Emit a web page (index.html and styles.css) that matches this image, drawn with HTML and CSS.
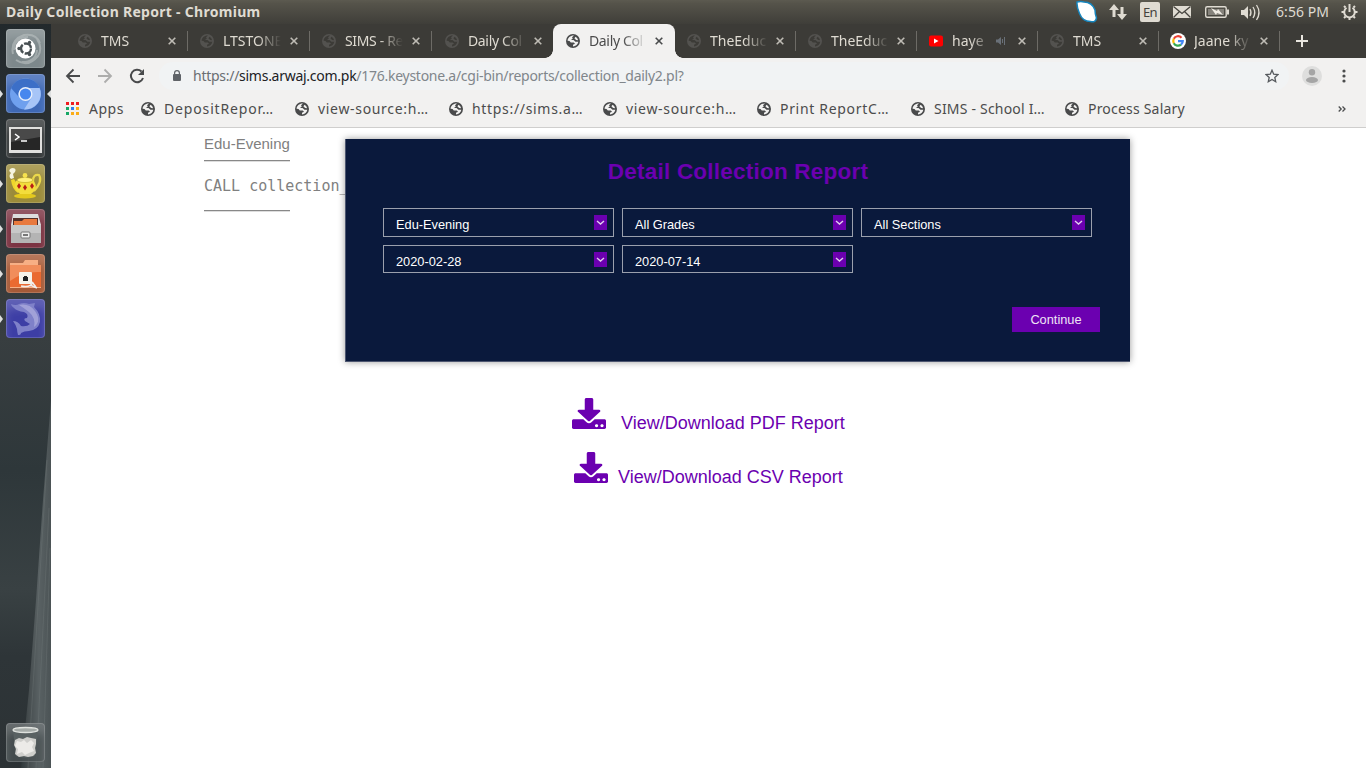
FILE: index.html
```
<!DOCTYPE html>
<html lang="en">
<head>
<meta charset="utf-8">
<title>Daily Collection Report</title>
<link rel="stylesheet" href="styles.css">
</head>
<body>
<svg class="defs" aria-hidden="true">
  <symbol id="globe" viewBox="0 0 14 14"><path fill="currentColor" fill-rule="evenodd" d="M7 0a7 7 0 1 0 0 14A7 7 0 0 0 7 0ZM8 1.5 6 3.2 6.8 4.5 5 6H7.5L9.5 7.8H12.3C12 10.5 9.8 12.3 7 12.4V10.8L9 9.7 7.8 8.4 4.8 8.4 3.5 7 1.6 6.8C1.7 3.9 4.3 1.3 8 1.5ZM9.6 2.8 8.4 4.2 10.1 5.9 12 6.2C11.8 4.7 10.9 3.6 9.6 2.8Z"/></symbol>
  <symbol id="close" viewBox="0 0 8 8"><path d="m.7.7 6.6 6.6m0-6.6L.7 7.3" stroke="currentColor" stroke-width="1.6"/></symbol>
  <symbol id="download" viewBox="0 0 512 512" preserveAspectRatio="none"><path fill="currentColor" d="M216 0h80c13.300 0 24 10.700 24 24v168h87.700c17.800 0 26.700 21.500 14.100 34.100L269.700 378.300c-7.500 7.500-19.800 7.500-27.300 0L90.100 226.100c-12.600-12.600-3.700-34.100 14.100-34.100H192V24c0-13.300 10.700-24 24-24zm296 376v112c0 13.300-10.700 24-24 24H24c-13.300 0-24-10.700-24-24V376c0-13.300 10.700-24 24-24h146.700l49 49c20.100 20.100 52.500 20.100 72.600 0l49-49H488c13.300 0 24 10.700 24 24zm-118 82c0-15-9-24-24-24s-24 9-24 24 9 24 24 24 24-9 24-24zm82 0c0-15-9-24-24-24s-24 9-24 24 9 24 24 24 24-9 24-24z"/></symbol>
</svg>

<header class="menubar">
  <span class="window-title">Daily Collection Report - Chromium</span>
  <svg class="tray" width="290" height="24" viewBox="1076 0 290 24">
    <path d="M1077 2q4-1 7 0 8 0 11 8 0 4 1.500 8-1 5-6 3.500-8 0-11-8-3-7-2.500-11.500Z" fill="#fff" stroke="#1685bd" stroke-width="1.500"/>
    <g fill="#dfdbd2">
      <path d="m1114 4 5 6h-3.500v7h-3v-7h-3.500Zm8 16-5-6h3.500V7h3v7h3.500Z"/>
      <rect x="1140" y="2" width="20" height="20" rx="2"/>
      <rect x="1173" y="6" width="18" height="12"/>
    </g>
    <text class="lang" x="1143" y="17">En</text>
    <path d="m1173.500 6.500 8.500 7 8.500-7m-17 11 6-6m11 6-6-6" fill="none" stroke="#45433e" stroke-width="1.300"/>
    <rect x="1205.700" y="6.700" width="20.500" height="10.500" rx="1.500" fill="none" stroke="#dfdbd2" stroke-width="1.400"/>
    <path d="M1208 9h16v6h-16Z" fill="#85827b"/><path d="M1227 9.500h2v5h-2Z" fill="#dfdbd2"/>
    <path d="m1211 8 6 3 1-2 5 6-6-2-1 2Z" fill="#eeeae2"/>
    <path d="M1241 10h3l4-4v13l-4-4h-3Z" fill="#dfdbd2"/>
    <path d="M1250 9q2 3.500 0 7m3-9q3.500 5.500 0 11m3.500-13q5 7.500 0 15" fill="none" stroke="#dfdbd2" stroke-width="1.300"/>
    <text class="clock" x="1276" y="17" textLength="53">6:56 PM</text>
    <g fill="none" stroke="#dfdbd2">
      <path d="M1346.500 7.800a5.300 5.300 0 1 0 6 0" stroke-width="2"/>
      <path d="M1349.500 4v8" stroke-width="2"/>
      <path d="m1344 6 1.500 1.500M1355 6l-1.500 1.500M1341.500 12h2.500m11 0h2.500M1344 18l1.500-1.500m9.500 1.500-1.500-1.500M1349.500 20v-2.500" stroke-width="2"/>
    </g>
  </svg>
</header>

<div class="desktop">
  <nav class="launcher">
    <svg class="backdrop" width="51" height="744" viewBox="0 24 51 744">
      <defs>
        <linearGradient id="wall" x2="0" y2="1"><stop stop-color="#22292c"/><stop offset=".3" stop-color="#33393b"/><stop offset=".42" stop-color="#383e40"/><stop offset=".6" stop-color="#2e373a"/><stop offset=".76" stop-color="#394143"/><stop offset=".85" stop-color="#2e3538"/><stop offset="1" stop-color="#2c3235"/></linearGradient>
        <linearGradient id="ridge"><stop stop-color="#30383b"/><stop offset=".25" stop-color="#454c4e"/><stop offset=".6" stop-color="#596163"/><stop offset="1" stop-color="#4b5355"/></linearGradient>
      </defs>
      <path fill="url(#wall)" d="M0 24h51v744H0Z"/>
      <path fill="url(#ridge)" d="M51 400 43 500 36 600 29 690 21 768h30Z"/>
      <path d="M47 460 28 768m21-260-13 260m14-220-7 220" stroke="#737a7b" stroke-opacity=".35" fill="none"/>
    </svg>
    <div class="apps">
      <svg class="app dash" viewBox="0 0 39 39">
        <path d="M7 25Q4 11 18 6q12-2 16 8M10 31q12 8 22-4 5-8-1-17M8 21Q8 8 22 8m9 13q-1 12-15 12" fill="none" stroke="#bac1c2" stroke-width="2" opacity=".6"/>
        <circle cx="19.500" cy="19.500" r="10" fill="#fff"/><circle cx="20" cy="19.500" r="5" fill="none" stroke="#485053" stroke-width="2.400" stroke-dasharray="9 1.470"/><g fill="#485053"><circle cx="13" cy="19.500" r="1.700"/><circle cx="23.500" cy="13.500" r="1.700"/><circle cx="23.500" cy="25.500" r="1.700"/></g>
      </svg>
      <svg class="app chromium" viewBox="0 0 39 39">
        <circle cx="19.500" cy="20" r="15.500" fill="#6fa0ee"/><path d="M5 14A16 16 0 0 1 34 14H20Q12 14 12 22Z" fill="#3c6fc7"/><path d="m26 23-8 12.500A15.500 15.500 0 0 0 33.500 14H22Z" fill="#a7c5f7"/><circle cx="19.500" cy="20" r="7" fill="#e8effb"/><circle cx="19.500" cy="20" r="5.600" fill="#4787ee"/>
      </svg>
      <svg class="app terminal" viewBox="0 0 39 39">
        <path d="M3 8h33v26H3Z" fill="#e0e0de"/><path d="M5 10h29v21H5Z" fill="#262626"/><path d="M5 10h29v8L5 23Z" fill="#494949"/><path d="m9 15 4 3-4 3m6 1h6" fill="none" stroke="#fff" stroke-width="1.500"/>
      </svg>
      <svg class="app teapot" viewBox="0 0 39 39">
        <path d="M27 17q0-7 6-6 4 6-5 16" fill="none" stroke="#ead84b" stroke-width="2.200"/><path d="m5 16 3-1 5 8-1 6Q6 25 5 16Z" fill="#f0d72b"/><ellipse cx="19" cy="32" rx="11" ry="2.500" fill="#e4c91d"/><path d="M10 17q9-6 18 0 5 8-3 13H14q-8-5-4-13Z" fill="#f3dd3c"/><ellipse cx="19" cy="16" rx="8" ry="2.500" fill="#fff07a" stroke="#b19718" stroke-width=".5"/><circle cx="19" cy="11.500" r="2.400" fill="#f7e24e"/><path d="m13 19 2 3-2 3-2-3Zm6 1.500 2 3-2 3-2-3Zm7-1.500 2 3-2 3-2-3Z" fill="#b91e16"/><path d="M5 15Q2 12 5 9q-4-3 1-5 5 0 3 4l-2 2 1 4Z" fill="#f5f3df"/>
      </svg>
      <svg class="app files" viewBox="0 0 39 39">
        <path d="M7 5h25l3 11H5Z" fill="#ddd"/><path d="M7 9h25v9H7Z" fill="#54302a"/><path d="M8 12h8l2-2h13v7H8Z" fill="#e8793e"/><path d="M5 16h30v18H5Z" fill="#b4b4b4"/><path d="M5 16h30v8H5Z" fill="#c8c8c8"/><rect x="15" y="23" width="9" height="6" rx="1" fill="#eee" stroke="#777"/><path d="M17 25h5v2h-5Z" fill="#777"/>
      </svg>
      <svg class="app network" viewBox="0 0 39 39">
        <path d="M4 9h13l2-3h13v5h3v23H4Z" fill="#f7af85"/><path d="M4 11h31v22H4Z" fill="#ea6a31"/><path d="M4 11h31v7Q17 17 4 27Z" fill="#f18d5b"/><rect x="13" y="18" width="13" height="12" rx="1" fill="#f6f2e9"/><path d="M17 23h1v-1h3v1h1v4h-5Z" fill="#222"/><path d="M15 32q10 2 12-4m-3 3 7 3m-5-6 4 5" stroke="#eee" fill="none" stroke-width="1.500"/>
      </svg>
      <svg class="app dolphin" viewBox="0 0 39 39">
        <path d="M5 5q5 2 8 0 5-2 10 0l6-1-1 4q7 7 6 15-2 8-11 9-5 0-8 2 0 2-3 2-1-4-1-6-1-4-4-8 5 0 8 5 6 1 9-2l-5-3q-2-3 2-3 2-4-3-6-7-1-10-4-3-2-3-4Z" fill="#7f81c9"/><path d="M13 6q10-2 16 6 7 10-1 16 2-9-5-15-5-4-10-7Z" fill="#b7b8e2" opacity=".6"/>
      </svg>
    </div>
    <svg class="app trash" viewBox="0 0 39 39">
      <path d="m7 8 3 25q10 3 19 0l3-25Z" fill="#596162"/><path d="m9 17 4-2 4 1 4-2 4 1 5 1v5l-1 4 1 5-3 3-5 1-4-1-5 1-4-3 1-5-2-4Z" fill="#cfcfcc"/><path d="m11 18 4 1 3-2 3 3 4-3 3 3-2 4 2 4-5 2-4 2-3-3-5 2 1-5-3-3Z" fill="#ecebe8"/><ellipse cx="19.500" cy="7" rx="12.500" ry="2.500" fill="#a5aba8" stroke="#dfe2de" stroke-width="1.300"/>
    </svg>
    <svg class="pips" width="51" height="744" viewBox="0 24 51 744"><path fill="#dedfdf" d="m0 90 3 4-3 4Zm0 90 3 4-3 4Zm0 45 3 4-3 4Zm0 45 3 4-3 4Zm0 45 3 4-3 4Zm51-225-4 4 4 4Z"/></svg>
  </nav>

  <main class="browser">
    <div class="tabs">
      <div class="tab wide"><svg class="favicon"><use href="#globe"/></svg><span>TMS</span><svg class="close"><use href="#close"/></svg></div>
      <div class="tab wide"><svg class="favicon"><use href="#globe"/></svg><span>LTSTONE</span><svg class="close"><use href="#close"/></svg></div>
      <div class="tab wide"><svg class="favicon"><use href="#globe"/></svg><span class="snug">SIMS - Re</span><svg class="close"><use href="#close"/></svg></div>
      <div class="tab plain"><svg class="favicon"><use href="#globe"/></svg><span class="snug">Daily Col</span><svg class="close"><use href="#close"/></svg></div>
      <div class="tab active"><svg class="favicon"><use href="#globe"/></svg><span class="snug">Daily Col</span><svg class="close"><use href="#close"/></svg></div>
      <div class="tab"><svg class="favicon"><use href="#globe"/></svg><span>TheEduc</span><svg class="close"><use href="#close"/></svg></div>
      <div class="tab"><svg class="favicon"><use href="#globe"/></svg><span>TheEduc</span><svg class="close"><use href="#close"/></svg></div>
      <div class="tab audio"><svg class="favicon" viewBox="0 0 14 14"><rect y="1.500" width="14" height="11" rx="2" fill="#f00"/><path d="m5 4.500 4.500 2.500L5 9.500Z" fill="#fff"/></svg><span>haye</span><svg class="speaker" viewBox="0 0 10 10"><path d="M0 3.500h2L5 1v8L2 6.500H0Z" fill="#697078"/><path d="M6.500 3v4M8.500 1v8" stroke="#697078"/></svg><svg class="close"><use href="#close"/></svg></div>
      <div class="tab"><svg class="favicon"><use href="#globe"/></svg><span>TMS</span><svg class="close"><use href="#close"/></svg></div>
      <div class="tab"><svg class="favicon google" viewBox="0 0 16 16"><circle cx="8" cy="8" r="8" fill="#fff"/><g fill="none" stroke-width="2.200"><path d="M11.500 4.700A4.800 4.800 0 0 0 3.800 5.800" stroke="#ea4335"/><path d="M3.800 5.800a4.800 4.800 0 0 0 0 4.400" stroke="#fbbc05"/><path d="M3.800 10.200a4.800 4.800 0 0 0 7.200 1.400" stroke="#34a853"/><path d="M8 8.100h4.800q0 2.200-1.800 3.500" stroke="#4285f4"/></g></svg><span>Jaane ky</span><svg class="close"><use href="#close"/></svg></div>
      <svg class="new-tab" viewBox="0 0 12 12"><path d="M6 0v12M0 6h12" stroke="#e9e6df" stroke-width="2"/></svg>
    </div>

    <div class="toolbar">
      <svg class="nav-icons" width="82" height="16" viewBox="0 0 82 16">
        <g fill="none" stroke-width="1.800"><path d="M15 8H2m6.500-6.500L2 8l6.500 6.500" stroke="#494a4b"/><path d="M33 8h13m-6.500-6.500L46 8l-6.500 6.500" stroke="#adadac"/><path d="M76.500 3.500A6.200 6.200 0 1 0 78 10" stroke="#494a4b" stroke-width="2"/></g><path d="M79 1v6h-6Z" fill="#494a4b"/>
      </svg>
      <div class="omnibox">
        <svg class="lock" viewBox="0 0 8 11"><path fill="#5f6368" fill-rule="evenodd" d="M1 4V3a3 3 0 0 1 6 0v1q1 0 1 1v5q0 1-1 1H1q-1 0-1-1V5q0-1 1-1Zm1.200 0h3.600V3a1.800 1.800 0 0 0-3.600 0Z"/></svg>
        <span class="url"><i>https://</i><b>sims.arwaj.com.pk</b>/176.keystone.a/cgi-bin/reports/collection_daily2.pl?</span>
        <svg class="star" viewBox="0 0 14 14"><path d="m7 1.200 1.700 4 4.300.4-3.200 2.900.9 4.200L7 10.500l-3.700 2.200.9-4.200L1 5.600l4.300-.4Z" fill="none" stroke="#55595d" stroke-width="1.300"/></svg>
      </div>
      <svg class="avatar" viewBox="0 0 20 20"><circle cx="10" cy="10" r="10" fill="#dededd"/><circle cx="10" cy="6.300" r="3.200" fill="#a5a5a5"/><ellipse cx="10" cy="14" rx="6" ry="3" fill="#a5a5a5"/></svg>
      <svg class="more" viewBox="0 0 4 14"><g fill="#4c4d4e"><circle cx="2" cy="2" r="1.600"/><circle cx="2" cy="7" r="1.600"/><circle cx="2" cy="12" r="1.600"/></g></svg>
    </div>

    <div class="bookmarks">
      <a class="bookmark apps-link"><svg viewBox="0 0 13 13"><path d="M0 0h3v3H0Zm5 0h3v3H5Zm5 0h3v3h-3Z" fill="#f01c20"/><path d="M0 5h3v3H0Zm0 5h3v3H0Z" fill="#16a765"/><path d="M5 5h3v3H5Z" fill="#307cf0"/><path d="M10 5h3v3h-3ZM5 10h3v3H5Zm5 0h3v3h-3Z" fill="#fbad18"/></svg><span>Apps</span></a>
      <a class="bookmark loose"><svg><use href="#globe"/></svg><span>DepositRepor…</span></a>
      <a class="bookmark mid"><svg><use href="#globe"/></svg><span>view-source:h…</span></a>
      <a class="bookmark mid"><svg><use href="#globe"/></svg><span>https://sims.a…</span></a>
      <a class="bookmark mid"><svg><use href="#globe"/></svg><span>view-source:h…</span></a>
      <a class="bookmark mid"><svg><use href="#globe"/></svg><span>Print ReportC…</span></a>
      <a class="bookmark slight"><svg><use href="#globe"/></svg><span>SIMS - School I…</span></a>
      <a class="bookmark slight"><svg><use href="#globe"/></svg><span>Process Salary</span></a>
      <svg class="overflow" viewBox="0 0 8 6"><path d="m.7.500 2.500 2.500L.7 5.500M4.500.500 7 3 4.500 5.500" fill="none" stroke="#4c4d4e" stroke-width="1.300"/></svg>
    </div>

    <section class="page">
      <div class="output">
        <div class="branch">Edu-Evening</div>
        <div class="rule"></div>
        <div class="call">CALL collection_</div>
        <div class="rule"></div>
      </div>
      <form class="panel">
        <h1>Detail Collection Report</h1>
        <div class="filters">
          <div class="select">Edu-Evening<svg viewBox="0 0 13 15"><path d="m3 6 3.500 3L10 6"/></svg></div>
          <div class="select">All Grades<svg viewBox="0 0 13 15"><path d="m3 6 3.500 3L10 6"/></svg></div>
          <div class="select">All Sections<svg viewBox="0 0 13 15"><path d="m3 6 3.500 3L10 6"/></svg></div>
          <div class="select">2020-02-28<svg viewBox="0 0 13 15"><path d="m3 6 3.500 3L10 6"/></svg></div>
          <div class="select">2020-07-14<svg viewBox="0 0 13 15"><path d="m3 6 3.500 3L10 6"/></svg></div>
        </div>
        <button type="button">Continue</button>
      </form>
      <div class="downloads">
        <a class="pdf"><svg><use href="#download"/></svg><span>View/Download PDF Report</span></a>
        <a class="csv"><svg><use href="#download"/></svg><span>View/Download CSV Report</span></a>
      </div>
    </section>
  </main>
</div>
</body>
</html>
```
FILE: styles.css
```
* { box-sizing: border-box; }
body { margin: 0; width: 1366px; height: 768px; overflow: hidden; background: #fff; font-family: "Noto Sans", "Open Sans", sans-serif; }
svg { display: block; flex: none; }
.defs { position: absolute; width: 0; height: 0; }

.menubar { height: 24px; display: flex; align-items: center; justify-content: space-between; padding-left: 6px; background: linear-gradient(#5c5a50, #55534a 15%, #3f3e39); }
.window-title { color: #dfdbd2; font-weight: 700; font-size: 14px; letter-spacing: .29px; line-height: 20px; white-space: nowrap; }
.lang { fill: #45433e; font-size: 13px; letter-spacing: -.8px; }
.clock { fill: #dfdbd2; font-size: 14px; }

.desktop { display: flex; height: 744px; }
.launcher { position: relative; width: 51px; display: flex; flex-direction: column; justify-content: space-between; padding: 5px 6px 6px; }
.backdrop, .pips { position: absolute; left: 0; top: 0; }
.apps { position: relative; display: flex; flex-direction: column; gap: 6px; }
.app { width: 39px; height: 39px; border-radius: 4px; box-shadow: inset 0 0 0 1px rgba(255,255,255,.16), inset 0 10px 9px rgba(255,255,255,.18); }
.trash { position: relative; background: rgba(75,83,85,.8); }
.dash { background: #7d888b; }
.chromium { background: #3e68b5; }
.terminal { background: #363a3b; }
.teapot { background: #9b8b3a; }
.files { background: #7b3342; }
.network { background: #a65a37; }
.dolphin { background: #3d3ea5; }

.browser { flex: 1; min-width: 0; display: flex; flex-direction: column; }
.tabs { height: 34px; display: flex; background: #3c3b37; padding-left: 15px; }
.tab { width: 121px; flex: none; height: 34px; display: flex; align-items: center; padding: 0 12px; color: #dfdbd2; position: relative; }
.tab.wide, .tab.active { width: 122px; }
.tab.plain { padding-right: 11px; padding-left: 13px; }
.tab.active { padding-left: 13px; }
.tab::after { content: ""; width: 1px; height: 20px; background: #6d6b66; position: absolute; right: 0; top: 7px; }
.tab.plain::after, .tab.active::after { display: none; }
.favicon { width: 14px; height: 14px; color: #53524f; }
.favicon.google { width: 16px; height: 16px; margin: 0 -1px; }
.tab span { width: 58px; margin-left: 9px; padding-bottom: 1px; font-size: 14px; line-height: 20px; overflow: hidden; white-space: nowrap; -webkit-mask-image: linear-gradient(90deg, #000 34px, transparent 58px); mask-image: linear-gradient(90deg, #000 34px, transparent 58px); }
.tab span.snug { letter-spacing: -.35px; }
.tab.audio span { width: 34px; -webkit-mask-image: linear-gradient(90deg, #000 18px, rgba(0,0,0,.3) 34px); mask-image: linear-gradient(90deg, #000 18px, rgba(0,0,0,.3) 34px); }
.speaker { width: 10px; height: 10px; margin-left: 10px; }
.close { width: 8px; height: 8px; margin-left: auto; color: #bfbcb5; }
.tab.active { background: #f2f1f0; color: #4c4c4c; border-radius: 8px 8px 0 0; }
.tab.active::before { content: ""; position: absolute; left: -8px; right: -8px; bottom: 0; height: 8px; background: radial-gradient(circle at 0 0, transparent 7.5px, #f2f1f0 8px) left / 8px 8px no-repeat, radial-gradient(circle at 100% 0, transparent 7.5px, #f2f1f0 8px) right / 8px 8px no-repeat; }
.tab.active .favicon, .tab.active .close { color: #494a4b; }
.new-tab { width: 12px; height: 12px; margin: 11px 0 0 16px; }

.toolbar { height: 36px; background: #f2f1f0; display: flex; align-items: center; padding: 0 20px 0 14px; }
.omnibox { width: 1130px; height: 28px; margin-left: 12px; border-radius: 14px; background: #f1f3f4; display: flex; align-items: center; padding: 0 10px 0 14px; }
.lock { width: 8px; height: 11px; margin-bottom: 2px; }
.url { margin-left: 12px; padding-bottom: 1px; font-size: 14px; line-height: 20px; letter-spacing: -.27px; color: #80868b; white-space: nowrap; }
.url i { font-style: normal; color: #6a6e72; }
.url b { font-weight: 400; color: #202124; }
.star { width: 14px; height: 14px; margin-left: auto; }
.avatar { width: 20px; height: 20px; margin-left: 13px; }
.more { width: 4px; height: 14px; margin-left: auto; }

.bookmarks { height: 34px; background: #f2f1f0; border-bottom: 1px solid #cfcecd; display: flex; align-items: center; padding: 0 20px 4px 15px; color: #4c4c4c; }
.bookmark { display: flex; align-items: center; width: 154px; flex: none; font-size: 14px; white-space: nowrap; }
.bookmark svg { width: 14px; height: 14px; color: #494a4b; }
.bookmark span { margin-left: 9px; }
.bookmark.loose span { letter-spacing: .85px; }
.bookmark.mid span { letter-spacing: .68px; }
.bookmark.slight span { letter-spacing: .2px; }
.bookmark.apps-link { width: 75px; }
.bookmark.apps-link svg { width: 13px; height: 13px; }
.bookmark.apps-link span { margin-left: 10px; letter-spacing: .5px; }
.overflow { width: 8px; height: 6px; margin-left: auto; }

.page { position: relative; flex: 1; background: #fff; font-family: "Liberation Sans", Arial, sans-serif; }
.output { padding: 7px 0 0 153px; color: #808080; height: 270px; font-size: 15px; line-height: 18px; }
.rule { width: 86px; height: 2px; border-top: 1px solid #888; border-bottom: 1px solid #ddd; }
.branch { height: 25px; }
.call { height: 48px; padding-top: 14px; font: 15px/20px "DejaVu Sans Mono", monospace; }
.panel { position: absolute; left: 294px; top: 11px; width: 785px; height: 223px; padding: 19px 30px 30px 37px; background: #0a193c; border: solid #4d5670; border-width: 0 0 1px 1px; box-shadow: 0 0 7px rgba(0,0,0,.4); }
.panel h1 { margin: 0 0 23px -7px; font-size: 22.5px; letter-spacing: .22px; line-height: 27px; text-align: center; color: #6b00b0; }
.filters { display: grid; grid-template-columns: repeat(3, 231px); gap: 8px; height: 99px; align-content: start; }
.select { height: 28.500px; border: 1px solid #9ba0ad; display: flex; align-items: center; justify-content: space-between; padding: 5px 6px 0 12px; color: #fff; font-size: 12.800px; }
.select svg { width: 13px; height: 15px; margin-top: -4px; background: #6b00b0; fill: none; stroke: #e2cdef; stroke-width: 1.400; }
.panel button { display: block; width: 88px; height: 25px; margin-left: auto; padding: 0; border: 0; background: #6b00b0; color: #eee4f5; font: 12.800px "Liberation Sans", Arial, sans-serif; }
.downloads { display: flex; flex-direction: column; gap: 22px; padding-left: 521px; color: #6b00b0; font-size: 18px; line-height: 20px; }
.downloads a { display: flex; height: 32px; align-items: flex-end; }
.downloads svg { width: 34px; height: 31px; margin-bottom: 1px; }
.downloads span { margin: 0 0 -3px 15px; }
.downloads .csv { padding-left: 2px; }
.downloads .csv span { margin-left: 10px; }
```
